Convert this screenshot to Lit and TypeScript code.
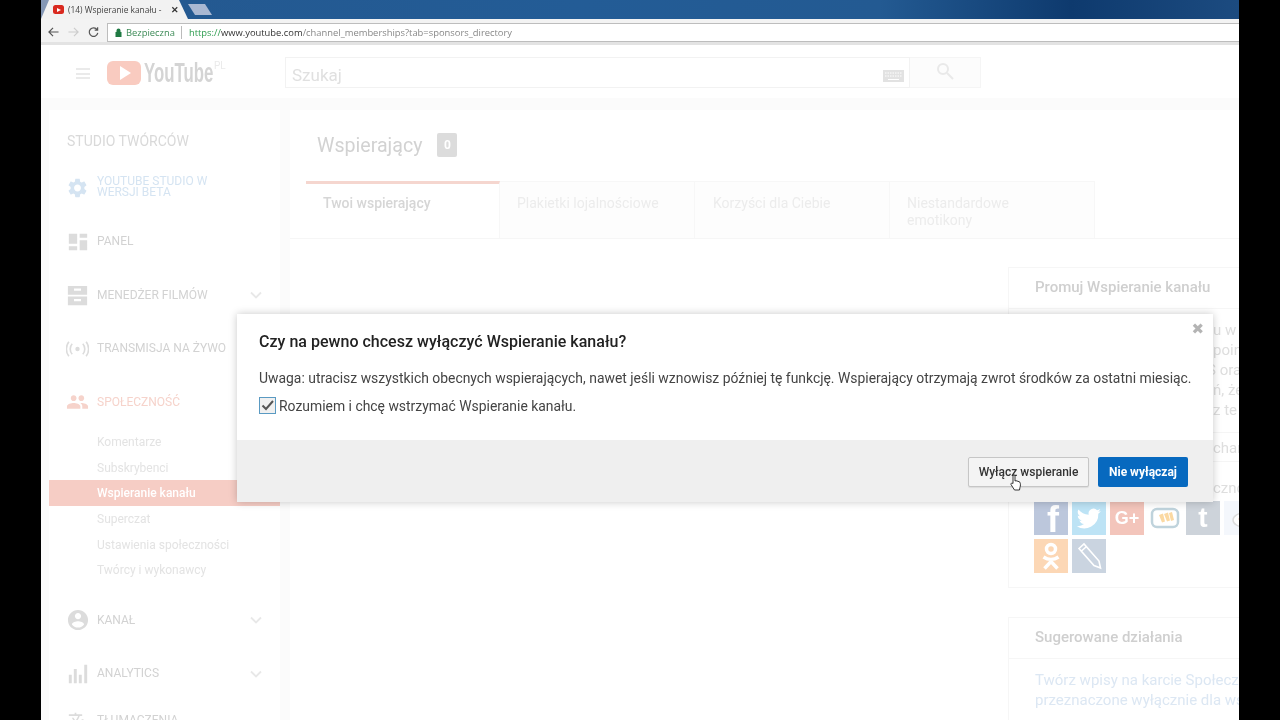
import { LitElement, html, css, svg } from "lit";
import { customElement } from "lit/decorators.js";

const P = {
  gear: "M19.14 12.94c.04-.3.06-.61.06-.94 0-.32-.02-.64-.07-.94l2.03-1.58c.18-.14.23-.41.12-.61l-1.92-3.32c-.12-.22-.37-.29-.59-.22l-2.39.96c-.5-.38-1.03-.7-1.62-.94l-.36-2.54c-.04-.24-.24-.41-.48-.41h-3.84c-.24 0-.43.17-.47.41l-.36 2.54c-.59.24-1.13.57-1.62.94l-2.39-.96c-.22-.08-.47 0-.59.22L2.74 8.87c-.12.21-.08.47.12.61l2.03 1.58c-.05.3-.09.63-.09.94s.02.64.07.94l-2.03 1.58c-.18.14-.23.41-.12.61l1.92 3.32c.12.22.37.29.59.22l2.39-.96c.5.38 1.03.7 1.62.94l.36 2.54c.05.24.24.41.48.41h3.84c.24 0 .44-.17.47-.41l.36-2.54c.59-.24 1.13-.56 1.62-.94l2.39.96c.22.08.47 0 .59-.22l1.92-3.32c.12-.22.07-.47-.12-.61l-2.01-1.58zM12 15.6c-1.98 0-3.6-1.62-3.6-3.6s1.62-3.6 3.6-3.6 3.6 1.62 3.6 3.6-1.62 3.6-3.6 3.6z",
  group: "M16 11c1.66 0 2.99-1.34 2.99-3S17.66 5 16 5c-1.66 0-3 1.34-3 3s1.34 3 3 3zm-8 0c1.66 0 2.99-1.34 2.99-3S9.66 5 8 5C6.34 5 5 6.34 5 8s1.34 3 3 3zm0 2c-2.33 0-7 1.17-7 3.5V19h14v-2.5c0-2.33-4.67-3.5-7-3.5zm8 0c-.29 0-.62.02-.97.05 1.16.84 1.97 1.97 1.97 3.45V19h6v-2.5c0-2.33-4.67-3.5-7-3.5z",
  account: "M12 1C5.9 1 1 5.9 1 12s4.9 11 11 11 11-4.9 11-11S18.100 1 12 1zm0 3.300c1.900 0 3.400 1.500 3.400 3.400s-1.500 3.400-3.400 3.400-3.400-1.500-3.400-3.400 1.500-3.400 3.400-3.400zm0 16c-2.800 0-5.200-1.400-6.600-3.500.03-2.200 4.400-3.400 6.600-3.400s6.570 1.200 6.600 3.400c-1.400 2.100-3.800 3.500-6.600 3.500z",
  dash: "M1 2h10v12H1zM14 2h9v5h-9zM14 10h9v12h-9zM1 17h10v5H1z",
  drawers: "M1 1h22v10H1zM1 13h22v10H1zM8 4v2.500h8V4zM8 16v2.500h8V16z",
  bars: "M1 13h3.500v10H1zM7 6h3.500v17H7zM13 13h3.500v10H13zM19.500 1H23v22h-3.500z",
  translate: "M12.87 15.07l-2.54-2.51.03-.03c1.74-1.94 2.98-4.17 3.71-6.53H17V4h-7V2H8v2H1v1.99h11.17C11.5 7.92 10.44 9.75 9 11.35 8.07 10.32 7.3 9.19 6.69 8h-2c.73 1.63 1.73 3.17 2.98 4.56l-5.09 5.02L4 19l5-5 3.11 3.11.76-2.04zM18.5 10h-2L12 22h2l1.12-3h4.75L21 22h2l-4.5-12zm-2.62 7l1.62-4.33L19.12 17h-3.24z",
  bird: "M23 5.500c-.8.4-1.700.6-2.600.7.900-.6 1.700-1.400 2-2.500-.9.500-1.900.9-2.900 1.100a4.600 4.600 0 0 0-7.800 4.200C7.900 8.800 4.500 7 2.200 4.200c-1.200 2.100-.6 4.800 1.400 6.100-.7 0-1.400-.2-2-.6 0 2.200 1.500 4.100 3.600 4.600-.7.2-1.400.2-2.100.1.600 1.800 2.300 3.200 4.300 3.200A9.300 9.300 0 0 1 .6 19.500 13 13 0 0 0 20.600 8c.9-.6 1.700-1.500 2.400-2.500z",
};
const icon = (d: string, size = 22) => html`<svg width=${size} height=${size} viewBox="0 0 24 24" fill="currentColor" fill-rule="evenodd">${svg`<path d=${d}></path>`}</svg>`;
const chevron = html`<svg class="chev" width="12" height="8" viewBox="0 0 12 8" fill="none" stroke="currentColor" stroke-width="1.800"><path d="M1 1.500l5 5 5-5"></path></svg>`;
const live = html`<svg width="24" height="16" viewBox="0 0 24 16" fill="none" stroke="currentColor" stroke-width="1.700"><circle cx="12" cy="8" r="2.300" fill="currentColor" stroke="none"></circle><path d="M6.500 2.500c-2.800 3-2.800 8 0 11M17.500 2.500c2.800 3 2.800 8 0 11M3 .5c-3.500 4.500-3.500 10.500 0 15M21 .5c3.500 4.500 3.500 10.500 0 15"></path></svg>`;

@customElement("app-root")
export class AppRoot extends LitElement {
  static styles = css`
    :host { display: block; width: 1280px; height: 720px; background: #000; overflow: hidden; font-family: Roboto, "Liberation Sans", sans-serif; }
    .win { position: relative; width: 1198px; height: 720px; margin-left: 41px; background: #fbfbfb; overflow: hidden; display: flex; flex-direction: column; filter: blur(0.35px); }

    .titlebar { height: 19px; flex: none; display: flex; align-items: flex-end; background: linear-gradient(90deg, #24588f 0%, #235c96 45%, #235a92 70%, #0e3a6e 86%, #1c4b80 100%); }
    .tabwrap { width: 147px; height: 19px; flex: none; background: linear-gradient(100deg, #8497b5 0, #8497b5 8px, transparent 8px); }
    .tabshape { width: 147px; height: 19px; background: #f2f2f2; clip-path: polygon(8px 0, 138px 0, 147px 19px, 0 19px); display: flex; align-items: center; padding-left: 12px; box-sizing: border-box; font: 8.400px "Open Sans", Roboto, sans-serif; color: #444; white-space: nowrap; }
    .ytfav { width: 11px; height: 9px; background: #d9291f; border-radius: 2.500px; margin-right: 4px; flex: none; display: flex; align-items: center; justify-content: center; }
    .ytfav i { border-left: 4px solid #fff; border-top: 2.200px solid transparent; border-bottom: 2.200px solid transparent; }
    .tabx { margin-left: 9px; font-size: 9px; color: #333; font-weight: 700; }
    .newtab { width: 24px; height: 11px; margin: 0 0 4px 0; background: #a9b8d2; clip-path: polygon(0 0, 17px 0, 24px 11px, 7px 11px); }

    .toolbar { height: 26px; flex: none; display: flex; align-items: center; box-sizing: border-box; background: #f3f3f3; border-bottom: 3px solid #e3e3e3; padding-top: 3px; }
    .nav { width: 66px; flex: none; display: flex; gap: 9px; align-items: center; padding-left: 7px; box-sizing: border-box; color: #555; }
    .url { flex: 1; height: 19px; box-sizing: border-box; background: #fff; border: 1px solid #bdbdbd; border-right: 0; display: flex; align-items: center; padding-left: 7px; font: 9.400px "Open Sans", Roboto, sans-serif; color: #888; white-space: nowrap; }
    .sec { color: #3d8b57; margin-left: 4px; }
    .sep { width: 1px; height: 13px; background: #bbb; margin: 0 7px 0 6px; }
    .url .https { color: #2f9d50; } .url b { color: #333; font-weight: 400; }

    .mast { height: 53px; flex: none; background: #fff; display: flex; align-items: center; box-sizing: border-box; padding: 2px 0 0 35px; }
    .burger { width: 14px; height: 11px; margin-top: 2px; flex: none; border-top: 2px solid #eaeaea; border-bottom: 2px solid #eaeaea; box-sizing: border-box; position: relative; }
    .burger::after { content: ""; position: absolute; left: 0; right: 0; top: 2.500px; height: 2px; background: #eaeaea; }
    .logo { width: 34px; height: 24px; flex: none; background: #f9cbc0; border-radius: 6px; margin-left: 17px; display: flex; align-items: center; justify-content: center; }
    .logo i { border-left: 11px solid #fff; border-top: 7px solid transparent; border-bottom: 7px solid transparent; margin-left: 2px; }
    .yt { font: 700 28px "Liberation Sans", sans-serif; color: #d4d4d4; margin-left: 3px; width: 70px; flex: none; white-space: nowrap; }
    .yt span { display: inline-block; transform: scaleX(.6); transform-origin: left center; }
    .pl { font-size: 10px; color: #eaeaea; align-self: flex-start; margin-top: 13px; width: 18px; flex: none; }
    .search { margin-left: 53px; width: 625px; height: 31px; box-sizing: border-box; flex: none; border: 1px solid #f2f2f2; display: flex; align-items: center; justify-content: space-between; padding: 4px 5px 0 6px; font-size: 17px; color: #e0e0e0; }
    .kbd { width: 21px; height: 12px; margin-top: 2px; background: #e2e2e2; display: block; }
    .sbtn { width: 71px; height: 31px; box-sizing: border-box; flex: none; border: 1px solid #f5f5f5; border-left: 0; background: #fcfcfc; display: flex; align-items: center; justify-content: center; color: #e9e9e9; padding-bottom: 3px; }

    .body { flex: 1; min-height: 0; display: flex; gap: 10px; padding: 12px 0 0 8px; }
    .side { width: 231px; flex: none; background: #fff; box-sizing: border-box; padding-top: 21px; }
    .side h2 { margin: 0 0 10.500px 18px; font-size: 14px; line-height: 20px; font-weight: 400; color: #d9d9d9; }
    .row { height: 53.500px; display: flex; align-items: center; padding-left: 17px; padding-right: 18px; font-size: 12px; font-weight: 400; color: #d2d2d2; }
    .row.short { height: 40px; }
    .row .ic { width: 23px; display: flex; justify-content: center; margin-right: 8px; flex: none; color: #dcdcdc; }
    .row .lbl { flex: 1; line-height: 11px; }
    .chev { color: #e8e8e8; }
    .beta, .beta .ic { color: #d5e4f2; }
    .beta .lbl { margin-top: -2px; }
    .soc, .soc .ic { color: #f6d3cb; }
    .sub { height: 25.700px; display: flex; align-items: center; padding-left: 48px; font-size: 12px; color: #e3e3e3; }
    .sub.on { background: #f6cdc5; color: #fff; font-weight: 500; }
    .subs { margin-bottom: 10.600px; }

    .main { flex: 1; min-width: 0; background: #fff; display: flex; flex-direction: column; }
    .head { display: flex; align-items: center; gap: 15px; padding: 23px 0 0 27px; height: 24px; }
    .head h1 { margin: 0; font-size: 19.600px; font-weight: 400; color: #d2d2d2; }
    .count { width: 20px; height: 24px; background: #dcdcdc; color: #fff; font-size: 12px; font-weight: 700; display: flex; align-items: center; justify-content: center; border-radius: 2px; }
    .tabs { display: flex; margin-top: 24px; padding-left: 16px; border-bottom: 1px solid #f6f6f6; }
    .t { height: 57px; box-sizing: border-box; padding: 13px 17px 0; font-size: 14px; line-height: 17px; color: #ececec; background: #fdfdfd; border: 1px solid #f7f7f7; border-width: 1px 1px 0 0; }
    .t.on { width: 194px; background: #fff; color: #d6d6d6; font-weight: 500; border-top: 3px solid #f5d6cf; padding-top: 11px; }
    .t.a { width: 195px; } .t.b { width: 195px; padding-left: 18px; } .t.c { width: 205px; }

    .cards { display: flex; flex-direction: column; align-items: flex-start; gap: 29px; padding: 28px 0 0 718px; }
    .card { width: 300px; box-sizing: border-box; border: 1px solid #f6f6f6; border-right: 0; flex: none; }
    .ch { height: 41px; box-sizing: border-box; padding: 10px 0 0 26px; font-size: 15px; line-height: 18px; font-weight: 500; color: #cfcfcf; border-bottom: 1px solid #f6f6f6; }
    .frag { padding-left: 204px; font-size: 15px; line-height: 20px; color: #dedede; white-space: nowrap; }
    .fr { padding-top: 11px; height: 124px; box-sizing: border-box; border-bottom: 1px solid #f5f5f5; }
    .fr .cut { margin-left: -6px; }
    .fr2 { height: 29px; box-sizing: border-box; padding-top: 5px; border-bottom: 1px solid #f5f5f5; }
    .fr3 { height: 39px; box-sizing: border-box; padding-top: 16px; }
    .share { display: flex; flex-wrap: wrap; gap: 4px; padding: 0 0 14px 25px; width: 260px; box-sizing: border-box; }
    .s { width: 34px; height: 34px; display: flex; align-items: center; justify-content: center; color: #fff; font: 700 22px "Liberation Sans", sans-serif; overflow: hidden; }
    .fb { background: #bcc7dc; font-size: 36px; align-items: flex-end; line-height: 30px; padding-left: 4px; box-sizing: border-box; } .tw { background: #bde3f5; } .gp { background: #f3c5bb; font-size: 18px; } .wk { background: #fff; } .tb { background: #cdd3da; font-size: 28px; } .rd { background: #f4f7fc; color: #ddd; justify-content: flex-start; padding-left: 6px; box-sizing: border-box; } .ok { background: #fcd7b5; } .pen { background: #cad4e0; }
    .links { padding: 11px 0 0 26px; font-size: 15px; line-height: 20px; color: #dce7f3; white-space: nowrap; height: 70px; box-sizing: border-box; }

    .modal { position: absolute; left: 196px; top: 314px; width: 976px; height: 188px; background: #fff; box-shadow: 0 0 8px rgba(0,0,0,.22); display: flex; flex-direction: column; color: #333; }
    .mtop { flex: 1; padding: 18px 22px 0; position: relative; }
    .mtop h3 { margin: 0; font-size: 16px; line-height: 19px; font-weight: 500; color: #222; letter-spacing: .02px; }
    .mtop p { margin: 17px 0 0; font-size: 13.920px; line-height: 20px; color: #444; white-space: nowrap; }
    .chk { display: flex; align-items: center; gap: 3px; margin-top: 9px; font-size: 13.920px; color: #444; }
    .box { width: 17px; height: 17px; box-sizing: border-box; border: 1.500px solid #5a9ac2; background: #f0f0f0; flex: none; display: flex; align-items: center; justify-content: center; color: #555; }
    .x { position: absolute; right: 9px; top: 6px; font-size: 15px; font-weight: 700; color: #b4b4b4; font-family: "DejaVu Sans", sans-serif; }
    .mfoot { height: 62px; flex: none; box-sizing: border-box; background: #efefef; display: flex; justify-content: flex-end; align-items: center; gap: 9px; padding: 2px 25px 0 0; }
    .btn { height: 30px; box-sizing: border-box; display: flex; align-items: center; justify-content: center; font-size: 12px; font-weight: 500; border-radius: 2px; position: relative; }
    .off { width: 121px; background: #f4f4f4; border: 1px solid #c6c6c6; color: #333; box-shadow: 0 1px 1px rgba(0,0,0,.08); }
    .keep { width: 90px; background: #0769bf; color: #fff; font-weight: 700; }
    .hand { position: absolute; left: 41px; top: 16px; }
  `;

  render() {
    return html`<div class="win">
      <div class="titlebar">
        <div class="tabwrap"><div class="tabshape"><span class="ytfav"><i></i></span>(14) Wspieranie kanału -<span class="tabx">✕</span></div></div>
        <div class="newtab"></div>
      </div>
      <div class="toolbar">
        <div class="nav">
          <svg width="11" height="12" viewBox="0 0 12 12" fill="none" stroke="#555" stroke-width="1.300"><path d="M11.500 6H1M5.500 1.500L1 6l4.500 4.500"></path></svg>
          <svg width="11" height="12" viewBox="0 0 12 12" fill="none" stroke="#ccc" stroke-width="1.300"><path d="M.5 6H11M6.500 1.500L11 6l-4.500 4.500"></path></svg>
          <svg width="11" height="12" viewBox="0 0 12 12" fill="none" stroke="#555" stroke-width="1.300"><path d="M10 3.500A4.700 4.700 0 1 0 10.700 7M10.500.8v3.200H7.300"></path></svg>
        </div>
        <div class="url">
          <svg width="7" height="9" viewBox="0 0 7 9"><path d="M1.500 4V2.500a2 2 0 0 1 4 0V4h1v5H.5V4z" fill="#1f7a43"></path></svg>
          <span class="sec">Bezpieczna</span><span class="sep"></span><span><span class="https">https://</span><b>www.youtube.com</b>/channel_memberships?tab=sponsors_directory</span>
        </div>
      </div>
      <div class="mast">
        <div class="burger"></div>
        <div class="logo"><i></i></div>
        <div class="yt"><span>YouTube</span></div>
        <div class="pl">PL</div>
        <div class="search">Szukaj<svg class="kbd" viewBox="0 0 21 12"><rect width="21" height="12" fill="#e2e2e2"></rect><path d="M2 3h17M2 6h17" stroke="#fff" stroke-dasharray="1.500 1"></path><path d="M5 9.500h11" stroke="#fff"></path></svg></div>
        <div class="sbtn"><svg width="18" height="18" viewBox="0 0 18 18" fill="none" stroke="currentColor" stroke-width="2"><circle cx="7" cy="7" r="5"></circle><path d="M11 11l6 6"></path></svg></div>
      </div>
      <div class="body">
        <div class="side">
          <h2>STUDIO TWÓRCÓW</h2>
          <div class="row beta"><span class="ic">${icon(P.gear, 26)}</span><span class="lbl">YOUTUBE STUDIO W<br>WERSJI BETA</span></div>
          <div class="row"><span class="ic">${icon(P.dash, 20)}</span><span class="lbl">PANEL</span></div>
          <div class="row"><span class="ic">${icon(P.drawers, 21)}</span><span class="lbl">MENEDŻER FILMÓW</span>${chevron}</div>
          <div class="row"><span class="ic">${live}</span><span class="lbl">TRANSMISJA NA ŻYWO</span></div>
          <div class="row soc"><span class="ic">${icon(P.group, 26)}</span><span class="lbl">SPOŁECZNOŚĆ</span></div>
          <div class="subs">
            <div class="sub">Komentarze</div>
            <div class="sub">Subskrybenci</div>
            <div class="sub on">Wspieranie kanału</div>
            <div class="sub">Superczat</div>
            <div class="sub">Ustawienia społeczności</div>
            <div class="sub">Twórcy i wykonawcy</div>
          </div>
          <div class="row"><span class="ic">${icon(P.account, 22)}</span><span class="lbl">KANAŁ</span>${chevron}</div>
          <div class="row"><span class="ic">${icon(P.bars, 20)}</span><span class="lbl">ANALYTICS</span>${chevron}</div>
          <div class="row short"><span class="ic">${icon(P.translate, 20)}</span><span class="lbl">TŁUMACZENIA</span></div>
        </div>
        <div class="main">
          <div class="head"><h1>Wspierający</h1><span class="count">0</span></div>
          <div class="tabs">
            <div class="t on">Twoi wspierający</div>
            <div class="t a">Plakietki lojalnościowe</div>
            <div class="t b">Korzyści dla Ciebie</div>
            <div class="t c">Niestandardowe<br>emotikony</div>
          </div>
          <div class="cards">
            <div class="card">
              <div class="ch">Promuj Wspieranie kanału</div>
              <div class="frag fr">u w<br>poin<br><span class="cut">S ora</span><br>ń, że<br>z te</div>
              <div class="frag fr2">char</div>
              <div class="frag fr3">czno</div>
              <div class="share">
                <div class="s fb">f</div>
                <div class="s tw">${icon(P.bird, 26)}</div>
                <div class="s gp">G+</div>
                <div class="s wk"><svg width="30" height="24" viewBox="0 0 30 24"><rect x="2" y="3" width="26" height="18" rx="5" fill="#fff" stroke="#bfd3dc" stroke-width="2.500"></rect><path d="M9 9l4-1.500 2 8-3 1zM14 8l4-1.500 2 8-3 1zM19 7l3-1 2 8-3 1z" fill="#fbd9a2"></path></svg></div>
                <div class="s tb">t</div>
                <div class="s rd"><svg width="28" height="24" viewBox="0 0 28 24" fill="#fff" stroke="#dcdcdc" stroke-width="1.500"><ellipse cx="14" cy="14" rx="11" ry="7"></ellipse><circle cx="10" cy="13" r="1.500" fill="#f8cdbc" stroke="none"></circle></svg></div>
                <div class="s ok"><svg width="20" height="28" viewBox="0 0 20 28" fill="none" stroke="#fff" stroke-width="3.500"><circle cx="10" cy="7" r="4.500"></circle><path d="M2.500 15c4.500 3 10.500 3 15 0M10 17.500v2M3.500 26.500l6.500-7 6.500 7"></path></svg></div>
                <div class="s pen"><svg width="26" height="28" viewBox="0 0 26 28" fill="none" stroke="#fff" stroke-width="1.600"><path d="M3 6.500L8 2l15 17 1.500 7-6.500-2.500zM5.500 9l5-4.500"></path></svg></div>
              </div>
            </div>
            <div class="card">
              <div class="ch">Sugerowane działania</div>
              <div class="links">Twórz wpisy na karcie Społecz<br>przeznaczone wyłącznie dla ws</div>
            </div>
          </div>
        </div>
      </div>
      <div class="modal">
        <div class="mtop">
          <h3>Czy na pewno chcesz wyłączyć Wspieranie kanału?</h3>
          <p>Uwaga: utracisz wszystkich obecnych wspierających, nawet jeśli wznowisz później tę funkcję. Wspierający otrzymają zwrot środków za ostatni miesiąc.</p>
          <div class="chk"><span class="box"><svg width="13" height="11" viewBox="0 0 13 11" fill="none" stroke="currentColor" stroke-width="2"><path d="M1.500 5.500l3.500 3.500 7-8"></path></svg></span>Rozumiem i chcę wstrzymać Wspieranie kanału.</div>
          <span class="x">✖</span>
        </div>
        <div class="mfoot">
          <div class="btn off">Wyłącz wspieranie
            <svg class="hand" width="12" height="17" viewBox="0 0 12 17"><path d="M3 8V2a1 1 0 0 1 2 0v5l1-.3 1 .3 1 .3 1 .4 1 .6c.6 1.500.6 3.500 0 5l-.5 2.700H4.500L1 10.500c-.5-1 .8-2 2-1z" fill="#fff" stroke="#222" stroke-width=".9"></path></svg>
          </div>
          <div class="btn keep">Nie wyłączaj</div>
        </div>
      </div>
    </div>`;
  }
}
